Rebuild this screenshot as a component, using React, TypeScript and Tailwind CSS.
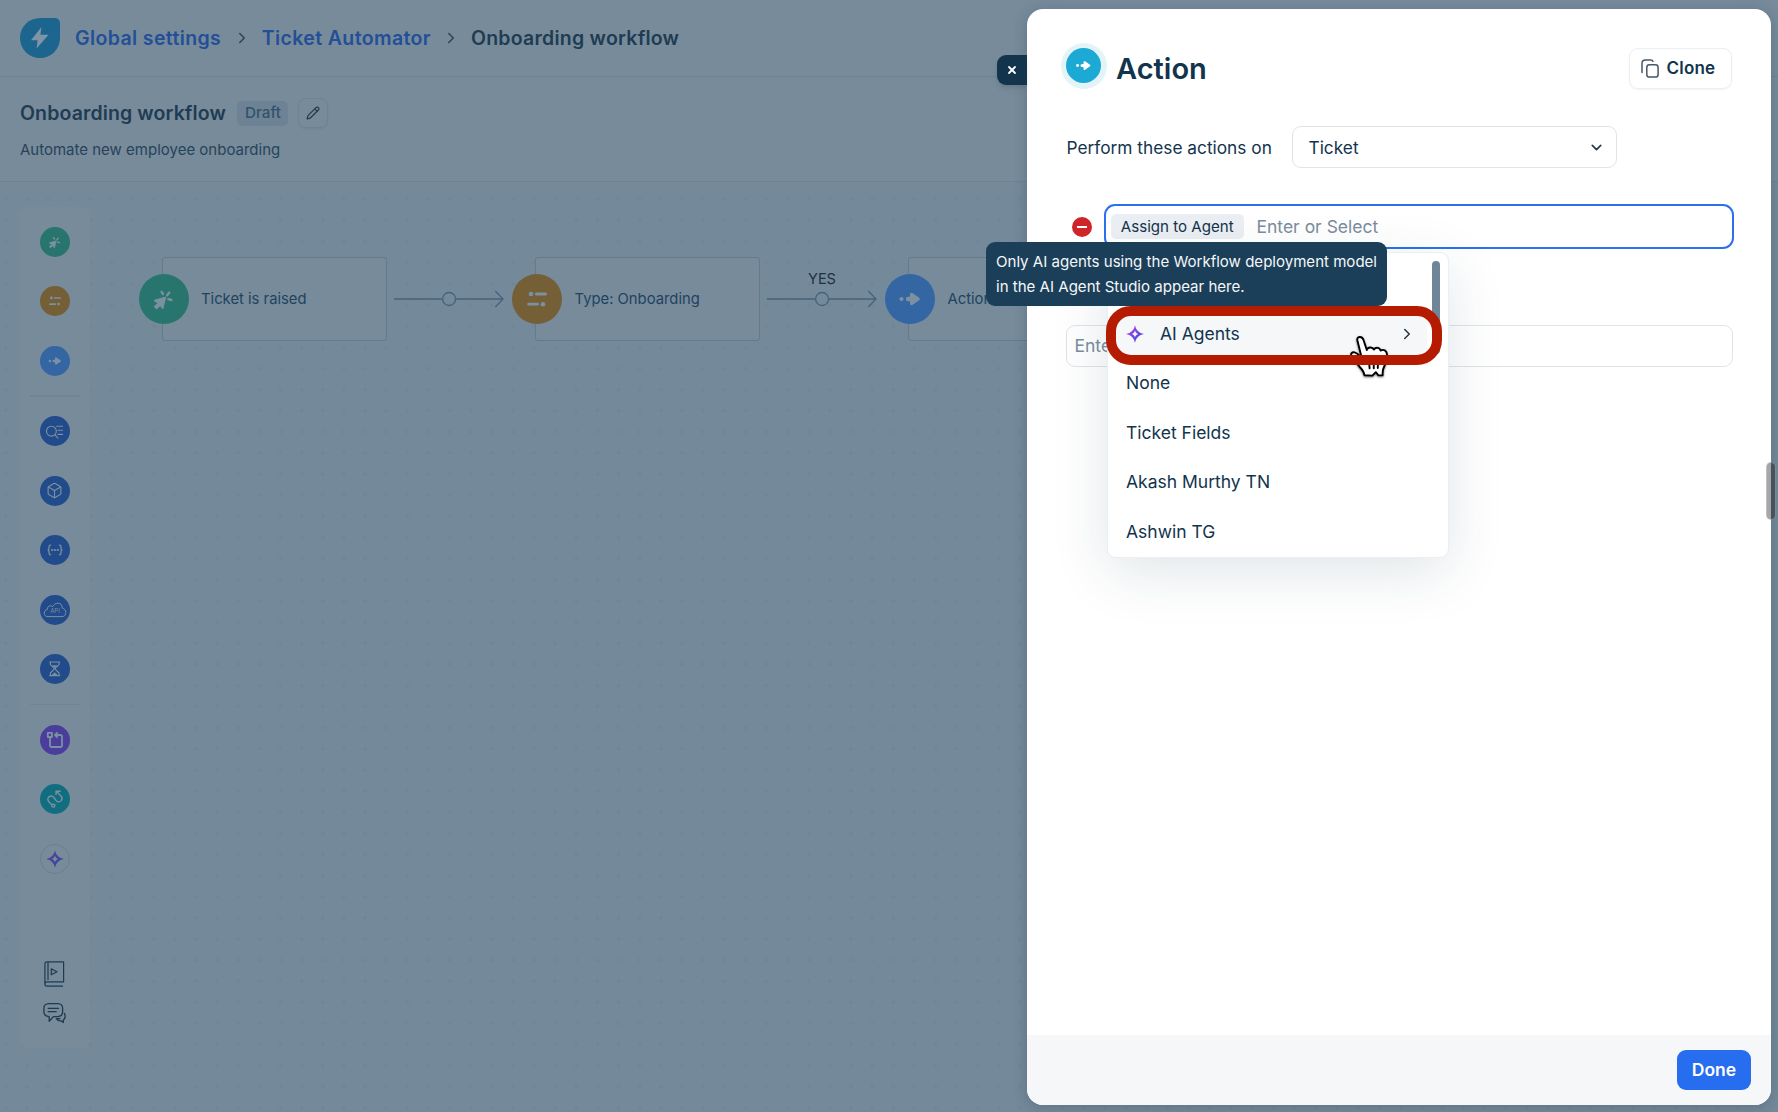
import { type ReactNode } from 'react';
import { Box, ChevronDown, ChevronRight, Pencil, X } from 'lucide-react';
import { clsx } from 'clsx';

type GlyphProps = { className?: string };

// All step glyphs share a 50x50 box so they can be reused in the palette and on the canvas
function TriggerGlyph({ className }: GlyphProps) {
  return (
    <svg viewBox="0 0 50 50" className={className} fill="currentColor" stroke="currentColor" strokeLinecap="round" strokeLinejoin="round">
      <path d="M26.4 23.4 15.8 26.6 19.6 29 15.8 32.6 17.8 34.4 21.4 30.8 23.6 34.2Z" strokeWidth="1.6" />
      <path d="M22.6 17.8 24 20M30.3 18.6 28.2 21.2M29.4 25.2 32.4 26" strokeWidth="2.4" fill="none" />
    </svg>
  );
}

function ConditionGlyph({ className }: GlyphProps) {
  return (
    <svg viewBox="0 0 50 50" className={className} fill="currentColor" stroke="currentColor" strokeWidth="2.8" strokeLinecap="round">
      <circle cx="19" cy="20" r="2.3" stroke="none" />
      <path d="M24.3 20H33.6M16.6 30.2H25.6" />
      <circle cx="31" cy="30.2" r="2.3" stroke="none" />
    </svg>
  );
}

function ActionGlyph({ className }: GlyphProps) {
  return (
    <svg viewBox="0 0 50 50" className={className} fill="currentColor" stroke="currentColor" strokeLinejoin="round" strokeLinecap="round">
      <circle cx="16.5" cy="25" r="2.1" stroke="none" />
      <path d="M23 25H27" strokeWidth="4.4" />
      <path d="M26.5 20.3 33.4 25 26.5 29.7Z" strokeWidth="3" />
    </svg>
  );
}

function ReaderGlyph({ className }: GlyphProps) {
  return (
    <svg viewBox="0 0 30 30" className={className} fill="none" stroke="currentColor" strokeWidth="1.1" strokeLinecap="round">
      <circle cx="11.4" cy="15.2" r="4.9" />
      <path d="M14.9 18.8 18 22.1M16.6 10.3H22.6M18 14.3H22.6M18 18.4H22.6" />
    </svg>
  );
}

function BracesGlyph({ className }: GlyphProps) {
  return (
    <svg viewBox="0 0 30 30" className={className} fill="none" stroke="currentColor" strokeWidth="1.3" strokeLinecap="round">
      <path d="M10.6 10.2C8.9 10.2 9.1 11.4 9.1 12.6 9.1 14 8.9 14.8 7.8 15 8.9 15.2 9.1 16 9.1 17.4 9.1 18.6 8.9 19.8 10.6 19.8M19.4 10.2C21.1 10.2 20.9 11.4 20.9 12.6 20.9 14 21.1 14.8 22.2 15 21.1 15.2 20.9 16 20.9 17.4 20.9 18.6 21.1 19.8 19.4 19.8" />
      <path d="M11.5 15H18.5" strokeWidth=".6" />
      <path d="M11.9 15h.01M15 15h.01M18.1 15h.01" strokeWidth="1.8" />
    </svg>
  );
}

function ApiGlyph({ className }: GlyphProps) {
  return (
    <svg viewBox="0 0 30 30" className={className} fill="none" stroke="currentColor" strokeWidth="1">
      <path d="M8 21.6C5.4 21.6 4.2 20.1 4.2 18.1 4.2 16.2 5.3 15 7.2 14.7 7.2 11.9 9 10.5 11.3 10.9 11.9 11 12.3 11.2 12.8 11.5 13.8 9.6 15.4 8.2 17.9 8.2 20.5 8.2 22.2 10 22.3 13.2 24.7 13.6 25.8 15.4 25.8 17.5 25.8 20 24.3 21.6 22 21.6Z" />
      <text x="15" y="18.4" textAnchor="middle" fontSize="6" stroke="none" fill="currentColor" className="font-[Inter]">API</text>
    </svg>
  );
}

function HourglassGlyph({ className }: GlyphProps) {
  return (
    <svg viewBox="0 0 30 30" className={className} fill="none" stroke="currentColor" strokeWidth="1.1" strokeLinejoin="round">
      <path d="M9.2 8H20.2M9.2 21.6H20.2M10.4 8V10.6L14 14.2V15.4L10.4 19V21.6M19 8V10.6L15.4 14.2V15.4L19 19V21.6" />
      <path d="M12.4 11.6H17L14.7 14ZM12 21 14.7 18.6 17.4 21Z" fill="currentColor" strokeWidth=".4" />
    </svg>
  );
}

function LoopGlyph({ className }: GlyphProps) {
  return (
    <svg viewBox="0 0 30 30" className={className} fill="none" stroke="currentColor" strokeWidth="1.8" strokeLinejoin="round">
      <rect x="7.8" y="7.8" width="4.2" height="4.2" />
      <path d="M10 12.2V20.2Q10 22 11.8 22H20.2Q22 22 22 20.2V11.8Q22 10 20.2 10H15.4" />
      <path d="M17.6 7.4 15 10 17.6 12.6" />
    </svg>
  );
}

function RouteGlyph({ className }: GlyphProps) {
  return (
    <svg viewBox="0 0 30 30" className={className} fill="none" stroke="currentColor" strokeWidth="1.4" strokeLinecap="round" strokeLinejoin="round">
      <circle cx="13.4" cy="21.6" r="1.5" />
      <path d="M12 20.8 9.2 18.2C7.6 16.4 7.6 14.2 9 12.8 10.6 11.6 12.4 11.8 13.6 13.2L16.2 16.6C17.8 18.4 19.8 18.2 21.2 16.6 22.4 15 22.2 13.2 21 12L16.4 7.4M16 10.6V7.2H20.2" />
    </svg>
  );
}

function SparkleGlyph({ className, id, from, to }: GlyphProps & { id: string; from: string; to: string }) {
  return (
    <svg viewBox="0 0 18 18" className={className}>
      <defs>
        <linearGradient id={id} x1="0" y1="0" x2="1" y2="1">
          <stop offset=".25" stopColor={from} />
          <stop offset=".65" stopColor={to} />
        </linearGradient>
      </defs>
      <path
        fill={`url(#${id})`}
        fillRule="evenodd"
        d="M9 0C9.9 5 12.9 8.1 18 9 12.9 9.9 9.9 13 9 18 8.1 13 5.1 9.9 0 9 5.1 8.1 8.1 5 9 0ZM9 5.8C8.4 7.4 7.4 8.4 5.8 9 7.4 9.6 8.4 10.6 9 12.2 9.6 10.6 10.6 9.6 12.2 9 10.6 8.4 9.6 7.4 9 5.8Z"
      />
    </svg>
  );
}

function CloneGlyph({ className }: GlyphProps) {
  return (
    <svg viewBox="0 0 18 19" className={className} fill="none" stroke="currentColor" strokeWidth="1.5" strokeLinecap="round">
      <rect x="5.8" y="5.8" width="11.3" height="12.2" rx="2.6" />
      <path d="M1 13.6V4.4Q1 1 4.4 1H9.6Q11.6 1 12 2.4" />
    </svg>
  );
}

const glyph = 'size-full text-[#7b90a1]';

const paletteGroups: { bg: string; icon: ReactNode }[][] = [
  [
    { bg: 'bg-[#27756c]', icon: <TriggerGlyph className={glyph} /> },
    { bg: 'bg-[#755f37]', icon: <ConditionGlyph className={glyph} /> },
    { bg: 'bg-[#3366a3]', icon: <ActionGlyph className={glyph} /> },
  ],
  [
    { bg: 'bg-[#214b8a]', icon: <ReaderGlyph className={glyph} /> },
    { bg: 'bg-[#214b8a]', icon: <Box className="size-[17px] text-[#7b90a1]" strokeWidth={1.6} /> },
    { bg: 'bg-[#214b8a]', icon: <BracesGlyph className={glyph} /> },
    { bg: 'bg-[#214b8a]', icon: <ApiGlyph className={glyph} /> },
    { bg: 'bg-[#214b8a]', icon: <HourglassGlyph className={glyph} /> },
  ],
  [
    { bg: 'bg-[#4a3d9c]', icon: <LoopGlyph className={glyph} /> },
    { bg: 'bg-[#116e80]', icon: <RouteGlyph className={glyph} /> },
    {
      bg: 'border border-[#6a8092]',
      icon: <SparkleGlyph id="palette-sparkle" from="#55409a" to="#3a479c" className="size-[18px] shrink-0" />,
    },
  ],
];

function Palette() {
  return (
    <aside className="absolute left-5 top-[25px] flex h-[841px] w-[69.5px] flex-col items-center rounded-lg bg-[#778b9b] pt-[19.6px]">
      {paletteGroups.map((group, i) => (
        <div key={i} className="flex flex-col items-center">
          {i > 0 && <div className="my-[19.5px] h-[1.5px] w-[50px] bg-[#6f8596]" />}
          <div className="flex flex-col gap-[29.54px]">
            {group.map((item, j) => (
              <div key={j} className={clsx('flex size-[30px] items-center justify-center rounded-full', item.bg)}>
                {item.icon}
              </div>
            ))}
          </div>
        </div>
      ))}
      <svg viewBox="0 0 21 26" className="mt-[87px] h-[26px] w-[21px] text-[#1f3b51]" fill="none" stroke="currentColor" strokeWidth="1.2" strokeLinejoin="round">
        <path d="M3 .8H19.6V20.8H3Q.9 20.8 .9 23 .9 25.2 3 25.2H19M.9 23V3Q.9 .8 3 .8M4 .8V19" />
        <path d="M7.3 7.9V13.7L13 10.8Z" />
      </svg>
      <svg viewBox="0 0 23 20" className="mt-[16px] h-5 w-[23px] text-[#1f3b51]" fill="none" stroke="currentColor" strokeWidth="1.3" strokeLinejoin="round" strokeLinecap="round">
        <path d="M5.8 .7H14.8Q19.6 .9 19.6 5.2V8.8Q19.6 13.4 14.8 13.6H10.4L6.2 18.2V13.6Q.9 13.4 .9 8.8V5.2Q.9 .9 5.8 .7ZM5.2 5.3H15.6M5.2 8.6H13.2" />
        <path d="M21.4 10.4Q23.4 14.6 20.2 17.2L20.4 19.4 17.8 17.8Q15 18 13.4 15.6H17" />
      </svg>
    </aside>
  );
}

function FlowNode({ className, bg, label, icon }: { className: string; bg: string; label: string; icon: ReactNode }) {
  return (
    <div className={clsx('absolute top-[75px] flex h-[84px] w-[225px] items-center rounded-[3px] border border-[#627b8e] bg-[#778b9b]', className)}>
      <div className={clsx('-ml-[24px] size-[50px] shrink-0 rounded-full', bg)}>{icon}</div>
      <span className="ml-[12.5px] whitespace-nowrap text-[14.8px] text-[#21435e]">{label}</span>
    </div>
  );
}

function Connector({ className, label }: { className: string; label?: string }) {
  return (
    <div className={clsx('absolute top-[84px] flex w-[110px] flex-col items-center', className)}>
      <span className="h-[24px] text-[14.5px] leading-[25px] text-[#1b3247]">{label}</span>
      <svg viewBox="0 0 110 18" className="h-[18px] w-[110px]" fill="none" stroke="#44637c" strokeWidth="1.3">
        <path d="M0 9H48.6M61.6 9H109M101.3 1 109 9 101.3 17" />
        <circle cx="55.1" cy="9" r="6.5" />
      </svg>
    </div>
  );
}

function Canvas() {
  return (
    <main className="relative grow overflow-hidden bg-[#748999]">
      <svg className="absolute inset-0 size-full">
        <defs>
          <pattern id="grid" x="16.5" y="6.9" width="21.13" height="21.13" patternUnits="userSpaceOnUse">
            <path d="M10.5 8.2V12.8M8.2 10.5H12.8" stroke="#6e8495" strokeWidth="1" />
          </pattern>
        </defs>
        <rect width="100%" height="100%" fill="url(#grid)" />
      </svg>
      <Palette />
      <FlowNode className="left-[161.5px]" bg="bg-[#27756c]" label="Ticket is raised" icon={<TriggerGlyph className={glyph} />} />
      <Connector className="left-[394px]" />
      <FlowNode className="left-[535px]" bg="bg-[#755f37]" label="Type: Onboarding" icon={<ConditionGlyph className={glyph} />} />
      <Connector className="left-[767px]" label="YES" />
      <FlowNode className="left-[908px]" bg="bg-[#3366a3]" label="Action" icon={<ActionGlyph className={glyph} />} />
    </main>
  );
}

function PageHeader() {
  return (
    <>
      <header className="flex h-[77px] shrink-0 items-center border-b border-[#6d8394] bg-[#778b9b] pl-5 text-[19.5px] font-semibold tracking-[0.38px] text-[#234f96]">
        <div className="flex size-10 items-center justify-center rounded-[20px] rounded-tr-[5px] bg-[#1b658e]">
          <svg viewBox="0 0 20 24" className="h-6 w-5" fill="#7f95a5">
            <path d="M11.4 1 1 14.2H7.6L6.6 22.6 18.6 8.8H10.4Z" />
          </svg>
        </div>
        <span className="ml-[15px] pt-[2px]">Global settings</span>
        <ChevronRight className="mx-[11.3px] size-[18px] text-[#29445a]" />
        <span className="pt-[2px]">Ticket Automator</span>
        <ChevronRight className="mx-[11px] size-[18px] text-[#29445a]" />
        <span className="pt-[2px] tracking-[0.24px] text-[#213c52]">Onboarding workflow</span>
      </header>
      <section className="flex h-[105px] shrink-0 flex-col border-b border-[#6d8394] bg-[#778b9b] pl-5 pt-[21px]">
        <div className="flex h-[30px] items-center">
          <h1 className="pt-[2px] text-[19.5px] font-semibold tracking-[0.12px] text-[#213c52]">Onboarding workflow</h1>
          <span className="ml-[11.5px] flex h-[25px] w-[51px] items-center justify-center rounded-[5px] bg-[#6d8395] text-[15.2px] font-medium text-[#31526b]">Draft</span>
          <span className="ml-[10px] flex size-[30px] items-center justify-center rounded-lg border border-[#6d8395] shadow-xs">
            <Pencil className="size-[14px] text-[#213c52]" strokeWidth={2.1} />
          </span>
        </div>
        <p className="mt-[10px] text-[15px] leading-[24px] text-[#274359]">Automate new employee onboarding</p>
      </section>
    </>
  );
}

const agents = ['None', 'Ticket Fields', 'Akash Murthy TN', 'Ashwin TG'];

function AgentMenu() {
  return (
    <div className="absolute left-[3px] top-[47.5px] h-[306px] w-[342px] rounded-[9px] border border-[#ebeef2] bg-white pt-[56px] text-[17.5px] text-[#12344d] shadow-[0_14px_56px_rgba(18,52,77,0.13)]">
      <div className="absolute right-[8px] top-[8px] h-[93px] w-[8px] rounded-full bg-[#6f8598]" />
      <div className="relative mx-2 mr-[21px] flex h-[49.6px] items-center bg-[#f5f7f9] pl-[10px]">
        <SparkleGlyph id="menu-sparkle" from="#a040e0" to="#5b46e8" className="size-[18px]" />
        <span className="ml-[16px]">AI Agents</span>
        <ChevronRight className="ml-auto mr-[11px] size-[18px] text-[#233746]" />
      </div>
      {agents.map((name) => (
        <div key={name} className="flex h-[49.6px] items-center pl-[18px]">{name}</div>
      ))}

      {/* Pointer sits on the hovered row, below the highlight ring */}
      <svg viewBox="0 0 40 43" className="absolute left-[242px] top-[82.5px] h-[43px] w-10 drop-shadow-[0_1px_1px_rgba(0,0,0,0.5)]" stroke="#000" strokeWidth="1.9" strokeLinejoin="round" strokeLinecap="round">
        <path fill="#fff" d="M7.6 5.2C6.6 2.4 8 1 10 1 11.8 1 13 2.2 13.6 4.2L16.8 14C17.6 11 22.4 10.4 24 13.6 25.6 11 29.6 11.2 30.6 14.6 33.4 12.8 36.8 14.6 37 18.6 37.2 25 35.4 28.6 33.6 32 32.6 34 32.6 36.4 32.6 39.4H28.4L25.8 36.2 22.4 39.6 14.4 39.2C14 35.8 12.4 33.8 9.8 31 6.2 27.2 4.6 23 1.8 19.8 .2 17.6 2 15.8 4.6 16.4 7.4 17 9.2 19.6 11.6 21.6Z" />
        <path fill="none" d="M19 25 19.6 32.4M23.6 25 23.8 32.2M28 24.6 27.8 32" />
      </svg>
      <div className="absolute -left-[2px] top-[53px] h-[59px] w-[336px] rounded-[25px] border-[10px] border-[#b51b00]" />
    </div>
  );
}

function AgentTooltip() {
  return (
    <div className="absolute -left-[118px] top-[37px] h-[64.5px] w-[401px] rounded-[9px] bg-[#1c3f59] px-[10px] pt-[7px] text-[15.05px] leading-[25px] text-[#f4f6f8]">
      <p className="whitespace-nowrap">Only AI agents using the Workflow deployment model</p>
      <p className="whitespace-nowrap">in the AI Agent Studio appear here.</p>
    </div>
  );
}

function ActionPanel() {
  return (
    <div className="absolute left-[1027px] top-[8.5px] flex h-[1096.5px] w-[744px] flex-col rounded-[16px] bg-white shadow-[0_2px_14px_rgba(18,52,77,0.25)]">
      <button className="absolute -left-[30px] top-[46px] flex h-[30px] w-[30px] items-center justify-center rounded-l-[9px] bg-[#12344d] shadow-md">
        <X className="size-[12px] text-white" strokeWidth={3.6} />
      </button>

      <div className="flex grow flex-col pl-[39px] pr-[38px]">
        <div className="mt-[39.5px] flex h-[41px] items-center">
          <div className="-ml-[5.5px] -mt-[6px] flex size-[46px] items-center justify-center rounded-full bg-[#e3f4f9]">
            <div className="size-[35px] rounded-full bg-[#1ca9d3]">
              <ActionGlyph className="size-full text-white" />
            </div>
          </div>
          <h2 className="ml-[9.5px] text-[29px] font-semibold text-[#12344d]">Action</h2>
          <button className="ml-auto mr-[1px] flex h-[41px] w-[103px] items-center rounded-[9px] border border-[#ebeff3] pl-[11px] text-[17px] font-semibold tracking-[0.2px] text-[#12344d] shadow-xs">
            <CloneGlyph className="h-[19px] w-[18px] text-[#475867]" />
            <span className="ml-[7.5px]">Clone</span>
          </button>
        </div>

        <div className="mt-[37px] flex h-[42px] items-center text-[17.3px] text-[#12344d]">
          <span className="w-[226px] whitespace-nowrap pl-[0.5px] pt-[1px]">Perform these actions on</span>
          <div className="flex h-[42px] w-[325px] items-center rounded-[9px] border border-[#dfe4ea] pl-[15.5px] pr-[11px]">
            <span className="pt-[1px]">Ticket</span>
            <ChevronDown className="ml-auto size-[17px] text-[#233746]" strokeWidth={2.2} />
          </div>
        </div>

        <div className="mt-[36px] flex h-[45px] items-center">
          <div className="ml-[5.5px] flex size-[20px] items-center justify-center rounded-full bg-[#cf2428]">
            <div className="h-[2px] w-[10px] bg-white" />
          </div>
          <div className="relative ml-[12.5px] mr-[-1px] flex h-[45px] grow items-center rounded-[11px] border-[2.5px] border-[#2c70ee] pl-[5px] text-[17.5px] text-[#7b8d9d]">
            <span className="flex h-[25px] w-[132.5px] items-center justify-center rounded-[5px] bg-[#ebeff3] pt-[1px] text-[15.1px] text-[#12344d]">Assign to Agent</span>
            <span className="ml-[13px] pt-[1px]">Enter or Select</span>
          </div>
        </div>

        {/* Zero-height anchor for the floating layers */}
        <div className="relative z-10 ml-[39px] h-0">
          <div className="absolute -left-[1px] -top-[44.5px]">
            <AgentMenu />
            <AgentTooltip />
          </div>
        </div>

        <div className="mt-[76px] flex h-[42px] items-center rounded-[9px] border border-[#dfe4ea] pl-[7.5px] text-[17.5px] text-[#7b8d9d]">
          Enter or Select
        </div>
      </div>

      <footer className="flex h-[70px] shrink-0 items-center justify-end rounded-b-[16px] bg-[#f5f7f9] pr-[20px]">
        <button className="h-10 w-[74px] rounded-[9px] bg-[#266df0] text-[17.5px] font-semibold text-white">Done</button>
      </footer>
    </div>
  );
}

export default function App() {
  return (
    <div className="relative flex h-[1112px] w-[1778px] flex-col overflow-hidden bg-[#748999] font-[Inter,sans-serif]">
      <PageHeader />
      <Canvas />
      <ActionPanel />
      <div className="absolute left-[1765.5px] top-[461.5px] h-[58px] w-[10px] rounded-full border border-white/30 bg-black/35" />
    </div>
  );
}
